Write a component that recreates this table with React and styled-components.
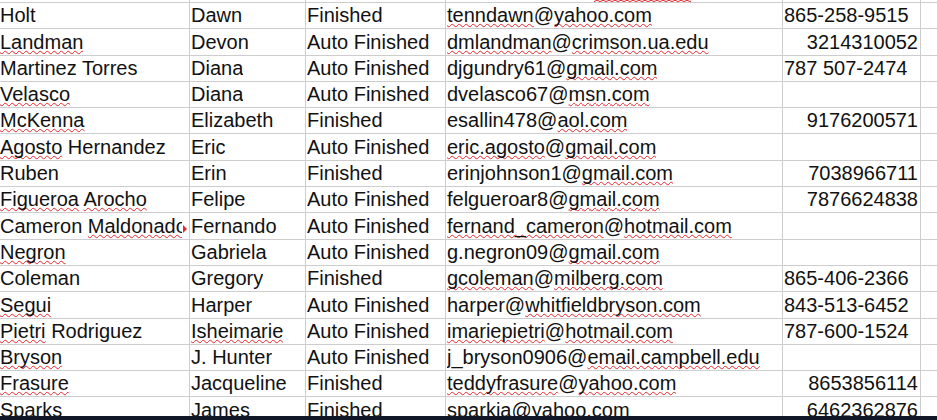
import React from 'react';
import styled, { createGlobalStyle } from 'styled-components';

const Global = createGlobalStyle`
  html, body { margin: 0; padding: 0; background: #fff; overflow: hidden; }
  #root { width: 937px; height: 420px; }
`;

const Screen = styled.div`
  width: 937px;
  height: 420px;
  display: flex;
  flex-direction: column;
  overflow: hidden;
  background: #fff;
`;

const Sheet = styled.div`
  flex: 1;
  min-height: 0;
  overflow: hidden;
  display: flex;
  flex-direction: column;
  margin-left: -1px;
  font-family: "Liberation Sans", Arial, sans-serif;
  font-size: 20px;
  color: #111;
`;

const Row = styled.div`
  flex: none;
  display: grid;
  grid-template-columns: 191px 116px 140px 337px 138px 40px;
  height: ${p => p.$h}px;
`;

const Cell = styled.div`
  position: relative;
  display: flex;
  align-items: flex-end;
  justify-content: ${p => (p.$right ? 'flex-end' : 'flex-start')};
  padding: 0 ${p => (p.$right ? '2px' : p.$clip ? '7px' : '0')} 1px ${p => (p.$right ? '0' : '1px')};
  border-right: 1px solid #cdcdcd;
  border-bottom: 1px solid #cdcdcd;
  overflow: hidden;
  white-space: nowrap;
  line-height: 23px;
  min-width: 0;
`;

const Text = styled.span`
  white-space: pre;
  flex: 0 1 auto;
  min-width: 0;
  overflow: hidden;
  padding-bottom: 6px;
  margin-bottom: -6px;
`;

const Wavy = styled.span`
  text-decoration: underline wavy #e8262b;
  text-decoration-thickness: 1.4px;
  text-decoration-skip-ink: none;
  text-underline-offset: 1px;
`;

const Overflow = styled.span`
  position: absolute;
  right: 2px;
  top: 50%;
  margin-top: -1px;
  width: 0;
  height: 0;
  border-top: 4px solid transparent;
  border-bottom: 4px solid transparent;
  border-left: 4px solid #e8262b;
`;

const TopSquiggle = styled.svg`
  display: block;
  margin-left: 147px;
  align-self: flex-start;
`;

const BottomBar = styled.div`
  flex: none;
  height: 4px;
  background: #111726;
`;

const nameWavy = new Set([
  'Landman', 'Velasco', 'McKenna', 'Agosto', 'Figueroa', 'Arocho', 'Maldonado',
  'Negron', 'Segui', 'Pietri', 'Bryson', 'Frasure', 'Isheimarie',
]);

const rows = [
  ['Holt', 'Dawn', 'Finished', 'tenndawn@yahoo.com', '865-258-9515'],
  ['Landman', 'Devon', 'Auto Finished', 'dmlandman@crimson.ua.edu', '3214310052'],
  ['Martinez Torres', 'Diana', 'Auto Finished', 'djgundry61@gmail.com', '787 507-2474'],
  ['Velasco', 'Diana', 'Auto Finished', 'dvelasco67@msn.com', ''],
  ['McKenna', 'Elizabeth', 'Finished', 'esallin478@aol.com', '9176200571'],
  ['Agosto Hernandez', 'Eric', 'Auto Finished', 'eric.agosto@gmail.com', ''],
  ['Ruben', 'Erin', 'Finished', 'erinjohnson1@gmail.com', '7038966711'],
  ['Figueroa Arocho', 'Felipe', 'Auto Finished', 'felgueroar8@gmail.com', '7876624838'],
  ['Cameron Maldonado', 'Fernando', 'Auto Finished', 'fernand_cameron@hotmail.com', ''],
  ['Negron', 'Gabriela', 'Auto Finished', 'g.negron09@gmail.com', ''],
  ['Coleman', 'Gregory', 'Finished', 'gcoleman@milberg.com', '865-406-2366'],
  ['Segui', 'Harper', 'Auto Finished', 'harper@whitfieldbryson.com', '843-513-6452'],
  ['Pietri Rodriguez', 'Isheimarie', 'Auto Finished', 'imariepietri@hotmail.com', '787-600-1524'],
  ['Bryson', 'J. Hunter', 'Auto Finished', 'j_bryson0906@email.campbell.edu', ''],
  ['Frasure', 'Jacqueline', 'Finished', 'teddyfrasure@yahoo.com', '8653856114'],
  ['Sparks', 'James', 'Finished', 'sparkja@yahoo.com', '6462362876'],
];

function Words({ text }) {
  const parts = text.split(/( )/);
  return (
    <Text>
      {parts.map((w, i) =>
        nameWavy.has(w) ? <Wavy key={i}>{w}</Wavy> : <React.Fragment key={i}>{w}</React.Fragment>
      )}
    </Text>
  );
}

function Email({ text }) {
  const [user, domain] = text.split('@');
  const mark = s => !/\d/.test(s) && s !== 'harper';
  return (
    <Text>
      {mark(user) ? <Wavy>{user}</Wavy> : user}@{mark(domain) ? <Wavy>{domain}</Wavy> : domain}
    </Text>
  );
}

export default function App() {
  return (
    <Screen>
      <Global />
      <Sheet>
        <Row $h={3}>
          <Cell /><Cell /><Cell />
          <Cell>
            <TopSquiggle width="97" height="2" viewBox="0 0 97 2">
              <path
                d={Array.from({ length: 17 }, (_, i) => `${i === 0 ? 'M' : 'L'}${i * 6} 1.6 L${i * 6 + 3} 0.2`).join(' ')}
                fill="none"
                stroke="#e8262b"
                strokeWidth="1"
              />
            </TopSquiggle>
          </Cell>
          <Cell /><Cell />
        </Row>
        {rows.map((r, i) => {
          const phoneNumeric = /^\d+$/.test(r[4]);
          const clipped = r[0] === 'Cameron Maldonado';
          return (
            <Row key={i} $h={26.3}>
              <Cell $clip={clipped}>
                <Words text={r[0]} />
                {clipped && <Overflow />}
              </Cell>
              <Cell><Words text={r[1]} /></Cell>
              <Cell><Text>{r[2]}</Text></Cell>
              <Cell><Email text={r[3]} /></Cell>
              <Cell $right={phoneNumeric}><Text>{r[4]}</Text></Cell>
              <Cell />
            </Row>
          );
        })}
      </Sheet>
      <BottomBar />
    </Screen>
  );
}
